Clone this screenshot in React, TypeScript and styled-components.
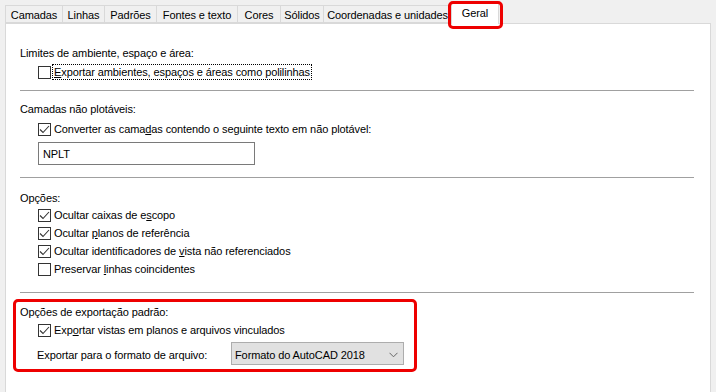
import React from "react";
import styled, { createGlobalStyle } from "styled-components";

const Global = createGlobalStyle`
  html, body { margin: 0; padding: 0; background: #f0f0f0; }
  body {
    font-family: "Liberation Sans", Arial, sans-serif;
    font-size: 11px;
    letter-spacing: -0.1px;
    color: #000;
  }
  * { box-sizing: border-box; }
`;

const Window = styled.div`
  width: 716px;
  height: 392px;
  overflow: hidden;
  padding: 2px 6px 0 5px;
  display: flex;
  flex-direction: column;
`;

const TabBar = styled.div`
  display: flex;
  align-items: flex-end;
  height: 21px;
  position: relative;
  z-index: 1;
`;

const Tab = styled.div<{ $w: number; $active?: boolean }>`
  width: ${(p) => p.$w}px;
  height: ${(p) => (p.$active ? 22 : 18)}px;
  margin-left: -1px;
  margin-bottom: ${(p) => (p.$active ? -1 : 0)}px;
  border: 1px solid #d9d9d9;
  border-bottom: ${(p) => (p.$active ? "none" : "1px solid #d9d9d9")};
  background: ${(p) => (p.$active ? "#fff" : "#f0f0f0")};
  display: flex;
  align-items: flex-start;
  padding-top: ${(p) => (p.$active ? 4 : 3)}px;
  justify-content: center;
  white-space: nowrap;
  position: relative;
  &:first-child { margin-left: 0; }
`;

const TabHighlight = styled.span`
  position: absolute;
  left: -4px;
  right: -5px;
  top: -2px;
  bottom: -5px;
  border: 3px solid #ee0000;
  border-radius: 5px;
  pointer-events: none;
`;

const Panel = styled.div`
  flex: 1;
  background: #fff;
  border: 1px solid #d9d9d9;
  border-bottom: none;
  padding: 0 0 0 14px;
  width: 706px;
`;

const Section = styled.div<{ $pt: number; $pb: number }>`
  padding-top: ${(p) => p.$pt}px;
  padding-bottom: ${(p) => p.$pb}px;
  display: flex;
  flex-direction: column;
`;

const Highlight = styled.div`
  margin-left: -7px;
  margin-top: 6px;
  width: 404px;
  height: 73px;
  border: 3px solid #ee0000;
  border-radius: 5px;
  padding: 2px 0 0 4px;
  display: flex;
  flex-direction: column;
`;

const Heading = styled.div<{ $gap: number }>`
  height: 16px;
  line-height: 16px;
  margin-bottom: ${(p) => p.$gap}px;
  white-space: nowrap;
`;

const Row = styled.label`
  display: flex;
  align-items: center;
  height: 18px;
  padding-left: 18px;
  white-space: nowrap;
`;

const Box = styled.span`
  width: 13px;
  height: 13px;
  border: 1px solid #333;
  background: #fff;
  display: inline-flex;
  flex: none;
  margin-right: 3px;
`;

const Label = styled.span<{ $focus?: boolean }>`
  line-height: 14px;
  padding-right: 1px;
  outline: ${(p) => (p.$focus ? "1px dotted #000" : "none")};
  outline-offset: 0;
  margin-left: ${(p) => (p.$focus ? -1 : 0)}px;
  padding-left: ${(p) => (p.$focus ? 1 : 0)}px;
`;

const Mn = styled.span`
  text-decoration: underline;
  text-underline-offset: 1px;
`;

const Separator = styled.div`
  height: 1px;
  background: #a0a0a0;
  margin-right: 16px;
`;

const TextInput = styled.div`
  margin: 4px 0 0 18px;
  width: 217px;
  height: 23px;
  border: 1px solid #7a7a7a;
  padding: 1px 0 0 4px;
  display: flex;
  align-items: center;
`;

const FormatRow = styled.div`
  display: flex;
  align-items: center;
  margin-top: 3px;
  padding-left: 17px;
  height: 23px;
`;

const FormatLabel = styled.span`
  width: 194px;
  white-space: nowrap;
  padding-top: 2px;
`;

const Select = styled.div`
  width: 173px;
  height: 23px;
  background: #e1e1e1;
  border: 1px solid #adadad;
  display: flex;
  align-items: center;
  justify-content: space-between;
  padding: 2px 5px 0 3px;
  white-space: nowrap;
`;

const Check = ({ checked }: { checked?: boolean }) => (
  <Box>
    {checked && (
      <svg width="11" height="11" viewBox="0 0 11 11">
        <polyline points="1,5.5 4,8.5 10,2" fill="none" stroke="#333" strokeWidth="1.1" />
      </svg>
    )}
  </Box>
);

const Chevron = () => (
  <svg width="9" height="6" viewBox="0 0 9 6">
    <polyline points="0.5,0.8 4.5,4.8 8.5,0.8" fill="none" stroke="#666" strokeWidth="1" />
  </svg>
);

const tabs: { name: string; w: number }[] = [
  { name: "Camadas", w: 58 },
  { name: "Linhas", w: 43 },
  { name: "Padrões", w: 53 },
  { name: "Fontes e texto", w: 82 },
  { name: "Cores", w: 44 },
  { name: "Sólidos", w: 44 },
  { name: "Coordenadas e unidades", w: 129 },
];

export default function App() {
  return (
    <>
      <Global />
      <Window>
        <TabBar>
          {tabs.map((t) => (
            <Tab key={t.name} $w={t.w}>
              {t.name}
            </Tab>
          ))}
          <Tab $w={48} $active>
            Geral
            <TabHighlight />
          </Tab>
        </TabBar>
        <Panel>
          <Section $pt={21} $pb={9}>
            <Heading $gap={2}>Limites de ambiente, espaço e área:</Heading>
            <Row>
              <Check />
              <Label $focus>
                <Mn>E</Mn>xportar ambientes, espaços e áreas como polilinhas
              </Label>
            </Row>
          </Section>
          <Separator />
          <Section $pt={10} $pb={12}>
            <Heading $gap={3}>Camadas não plotáveis:</Heading>
            <Row>
              <Check checked />
              <Label>
                Converter as cama<Mn>d</Mn>as contendo o seguinte texto em não plotável:
              </Label>
            </Row>
            <TextInput>NPLT</TextInput>
          </Section>
          <Separator />
          <Section $pt={12} $pb={14}>
            <Heading $gap={0}>Opções:</Heading>
            <Row>
              <Check checked />
              <Label>
                Ocultar caixas de e<Mn>s</Mn>copo
              </Label>
            </Row>
            <Row>
              <Check checked />
              <Label>
                Ocultar <Mn>p</Mn>lanos de referência
              </Label>
            </Row>
            <Row>
              <Check checked />
              <Label>
                Ocultar identificadores de <Mn>v</Mn>ista não referenciados
              </Label>
            </Row>
            <Row>
              <Check />
              <Label>
                Preservar <Mn>l</Mn>inhas coincidentes
              </Label>
            </Row>
          </Section>
          <Separator />
          <Highlight>
            <Heading $gap={1}>Opções de exportação padrão:</Heading>
            <Row>
              <Check checked />
              <Label>
                Exp<Mn>o</Mn>rtar vistas em planos e arquivos vinculados
              </Label>
            </Row>
            <FormatRow>
              <FormatLabel>Exportar para o formato de arquivo:</FormatLabel>
              <Select>
                <span>Formato do AutoCAD 2018</span>
                <Chevron />
              </Select>
            </FormatRow>
          </Highlight>
        </Panel>
      </Window>
    </>
  );
}
